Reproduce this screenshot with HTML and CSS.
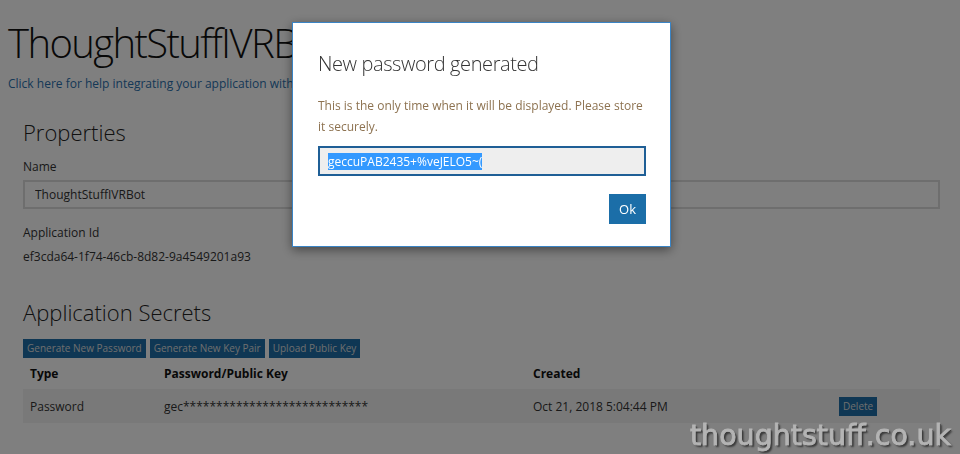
FILE: index.html
```html
<!DOCTYPE html>
<html lang="en">
<head>
    <meta charset="UTF-8">
    <title>ThoughtStuffIVRBot</title>
    <link rel="stylesheet" href="styles.css">
</head>
<body>
    <h1 class="app-title">ThoughtStuffIVRBot</h1>
    <a class="help-link" href="#">Click here for help integrating your application with Microsoft</a>

    <div class="section">
        <h2>Properties</h2>
        <label class="field-label">Name</label>
        <input class="name-input" type="text" value="ThoughtStuffIVRBot">
        <div class="field-label">Application Id</div>
        <div class="field-value">ef3cda64-1f74-46cb-8d82-9a4549201a93</div>
    </div>

    <div class="section secrets">
        <h2>Application Secrets</h2>
        <div class="actions">
            <button class="small-btn">Generate New Password</button>
            <button class="small-btn">Generate New Key Pair</button>
            <button class="small-btn">Upload Public Key</button>
        </div>
        <div class="secrets-table">
            <div class="row head">
                <span>Type</span>
                <span>Password/Public Key</span>
                <span>Created</span>
                <span></span>
            </div>
            <div class="row item">
                <span>Password</span>
                <span>gec****************************</span>
                <span>Oct 21, 2018 5:04:44 PM</span>
                <span><button class="small-btn">Delete</button></span>
            </div>
        </div>
    </div>

    <!-- dialog shown after generating a password -->
    <div class="backdrop"></div>
    <div class="dialog">
        <h3>New password generated</h3>
        <p>This is the only time when it will be displayed. Please store it securely.</p>
        <div class="pw-box"><span class="pw-selected">geccuPAB2435+%veJELO5~(</span></div>
        <div class="dialog-footer">
            <button class="ok-btn">Ok</button>
        </div>
    </div>

    <div class="watermark">thoughtstuff.co.uk</div>
</body>
</html>
```

FILE: styles.css
```css
body {
    font-family: "Open Sans", "Noto Sans", sans-serif;
    font-size: 12px;
    color: #333;
    background-color: #fff;
    margin: 0;
    padding: 8px;
}
.app-title {
    font-weight: 300;
    font-size: 40px;
    line-height: 54px;
    margin: 8px 0 0 0;
    color: #111;
    letter-spacing: -1.6px;
}
.help-link {
    display: block;
    color: #2a70ad;
    text-decoration: none;
    margin-top: 5px;
    line-height: 18px;
}
.section {
    padding: 0 12px 0 15px;
}
.section h2 {
    font-weight: 300;
    font-size: 22px;
    line-height: 30px;
    margin: 24px 0 11px 0;
    color: #222;
}
.field-label {
    display: block;
    line-height: 18px;
    margin-bottom: 4px;
}
.name-input {
    display: block;
    box-sizing: border-box;
    width: 100%;
    height: 29px;
    border: 2px solid #ddd;
    padding: 0 10px;
    font-family: inherit;
    font-size: 12px;
    color: #333;
    margin-bottom: 15px;
}
.field-value {
    line-height: 18px;
    margin-top: 6px;
}
.secrets h2 {
    margin-top: 31px;
    margin-bottom: 12px;
}
.actions {
    display: flex;
    gap: 4px;
}
.small-btn {
    background-color: #1f6fa8;
    color: #ddd;
    border: none;
    font-family: inherit;
    font-size: 10px;
    line-height: 19px;
    padding: 0 4px;
    cursor: pointer;
}
.secrets-table {
    margin-top: 2px;
}
.row {
    display: grid;
    grid-template-columns: 134px 369px 306px 1fr;
    align-items: center;
}
.row span {
    padding-left: 7px;
}
.row.head {
    height: 26px;
    font-weight: bold;
    color: #111;
}
.row.item {
    height: 34px;
    background-color: #f3f3f3;
    margin-top: 3px;
}
.backdrop {
    position: fixed;
    left: 0;
    top: 0;
    width: 100%;
    height: 100%;
    background-color: rgba(0,0,0,0.5);
}
.dialog {
    position: fixed;
    left: 292px;
    top: 22px;
    width: 328px;
    height: 175px;
    padding: 20px 24px 28px 25px;
    background-color: #fff;
    border: 1px solid #3a84c5;
    box-shadow: 0 3px 10px rgba(0,0,0,0.45);
}
.dialog h3 {
    font-weight: 300;
    font-size: 20px;
    line-height: 28px;
    margin: 7px 0 0 0;
    color: #333;
    letter-spacing: -0.4px;
}
.dialog p {
    color: #8d7250;
    font-size: 12px;
    line-height: 21px;
    margin: 17px 0 9px 0;
}
.pw-box {
    box-sizing: border-box;
    height: 30px;
    border: 2px solid #1f5f96;
    background-color: #eee;
    padding: 0 8px;
    display: flex;
    align-items: center;
    font-size: 12px;
}
.pw-selected {
    background-color: #3399ff;
    color: #fff;
    line-height: 17px;
}
.dialog-footer {
    display: flex;
    justify-content: flex-end;
    margin-top: 18px;
}
.ok-btn {
    background-color: #1b6ea8;
    color: white;
    border: none;
    width: 37px;
    height: 30px;
    font-family: inherit;
    font-size: 13px;
    cursor: pointer;
}
.watermark {
    position: fixed;
    right: 9px;
    bottom: 2px;
    font-family: "DejaVu Sans", sans-serif;
    font-size: 28.5px;
    color: #b4b4b4;
    -webkit-text-stroke: 0.9px #b4b4b4;
    text-shadow: 1px 1px 0 #3a3a3a, 2px 2px 2px rgba(0,0,0,0.6);
}
```
